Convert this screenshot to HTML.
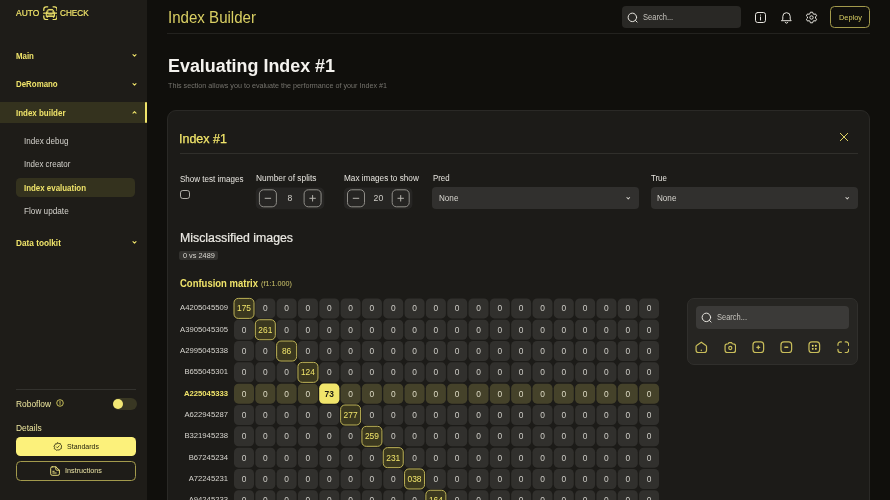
<!DOCTYPE html>
<html><head><meta charset="utf-8"><title>Index Builder</title>
<style>
*{box-sizing:border-box;margin:0;padding:0}
html,body{width:890px;height:500px;overflow:hidden;background:#100f0c;font-family:"Liberation Sans",sans-serif;color:#e8e6e0}
.sb *,.main *{position:absolute}
body>div{position:absolute;will-change:transform}
.t{white-space:nowrap;line-height:1;transform-origin:0 0}
.sb{left:0;top:0;width:147px;height:500px;background:#1e1c18}
.chev{left:131px;width:7px;height:7px}
.main{left:0;top:0;width:890px;height:500px}
.card{left:167px;top:110px;width:703px;height:420px;background:#1c1b18;border:1px solid #2a2926;border-radius:9px}
.step{height:22px;background:#262523;border-radius:5px}
.sbtn{width:18px;height:18px;border:1px solid #8f8d88;border-radius:4.500px;top:2px}
.sel{height:22px;background:#31302e;border-radius:4px}
.c{position:absolute;width:20px;height:20px;color:#cfcdc7;font-size:8.400px;line-height:20.200px;text-align:center}
.c.h{color:#dedbc6}
.c.d{color:#f0e46a}
.c.d.sl{color:#1a1912;font-weight:bold}
.rl{position:absolute;left:150px;width:78px;text-align:right;font-size:7.700px;color:#d6d4ce;line-height:20.600px;white-space:nowrap}
.rl.hl{color:#f0e46a;font-weight:bold}
.ti{width:12.600px;height:12.600px;top:340.600px;fill:none;stroke:#c9be5a;stroke-width:1.250;stroke-linecap:round;stroke-linejoin:round}
</style></head><body>
<div class="sb">
  <div class="t" style="left:16.30px;top:8.10px;font-size:9.8px;transform:scaleX(0.8618);color:#f0e46a;-webkit-text-stroke:.2px #f0e46a">AUTO</div>
  <svg style="left:42.500px;top:5.500px" width="14.800" height="14.300" viewBox="0 0 15 14.500" fill="none" stroke="#f0e46a" stroke-width="1.250" stroke-linecap="round" stroke-linejoin="round"><path d="M.8 4.500V3.200A2.400 2.400 0 0 1 3.200.8h1.600M10.200.8h1.600a2.400 2.400 0 0 1 2.400 2.400v1.300M14.200 10v1.300a2.400 2.400 0 0 1-2.400 2.400h-1.600M4.800 13.700H3.200A2.400 2.400 0 0 1 .8 11.300V10M.6 7.250h13.800"/><path d="M3.300 10.200V7.500L4.400 4.400Q4.700 3.500 5.700 3.500H9.300Q10.300 3.500 10.600 4.400L11.700 7.500V10.200Z" fill="#f0e46a" fill-opacity=".6" stroke-width="1"/><path d="M5.300 6.600L5.900 4.900H9.100L9.700 6.600Z" fill="#1e1c18" stroke="none"/><path d="M4.900 8.800h.01M10.100 8.800h.01" stroke="#1e1c18" stroke-width="1.200"/><path d="M4.300 10.600v.7M10.700 10.600v.7" stroke-width="1.300"/></svg>
  <div class="t" style="left:59.60px;top:8.10px;font-size:9.8px;transform:scaleX(0.8340);color:#f0e46a;-webkit-text-stroke:.2px #f0e46a">CHECK</div>

  <div class="t" style="left:16.30px;top:51.87px;font-size:8.3px;transform:scaleX(0.9471);font-weight:bold;color:#f0e46a">Main</div>
  <svg class="chev" style="top:52px" viewBox="0 0 7 7" fill="none" stroke="#f0e46a" stroke-width="1.100" stroke-linecap="round" stroke-linejoin="round"><path d="M2 2.700L3.500 4.200 5 2.700"/></svg>
  <div class="t" style="left:16.30px;top:80.27px;font-size:8.3px;transform:scaleX(0.9522);font-weight:bold;color:#f0e46a">DeRomano</div>
  <svg class="chev" style="top:80.500px" viewBox="0 0 7 7" fill="none" stroke="#f0e46a" stroke-width="1.100" stroke-linecap="round" stroke-linejoin="round"><path d="M2 2.700L3.500 4.200 5 2.700"/></svg>
  <div style="left:0;top:102px;width:147px;height:21px;background:#34321e"></div>
  <div style="left:144.800px;top:101.800px;width:2.500px;height:21.100px;background:#f0e46a;border-radius:1px"></div>
  <div class="t" style="left:16.20px;top:108.57px;font-size:8.3px;transform:scaleX(0.9587);font-weight:bold;color:#f0e46a">Index builder</div>
  <svg class="chev" style="top:109px" viewBox="0 0 7 7" fill="none" stroke="#f0e46a" stroke-width="1.100" stroke-linecap="round" stroke-linejoin="round"><path d="M2 4.200L3.500 2.700 5 4.200"/></svg>

  <div class="t" style="left:24.40px;top:137.07px;font-size:8.3px;transform:scaleX(0.9721);color:#d4d2cc">Index debug</div>
  <div class="t" style="left:24.40px;top:159.87px;font-size:8.3px;transform:scaleX(0.9561);color:#d4d2cc">Index creator</div>
  <div style="left:16px;top:177.500px;width:119px;height:19px;background:#34321e;border-radius:4.500px"></div>
  <div class="t" style="left:24.40px;top:183.87px;font-size:8.3px;transform:scaleX(0.9537);font-weight:bold;color:#f0e46a">Index evaluation</div>
  <div class="t" style="left:24.40px;top:207.07px;font-size:8.3px;transform:scaleX(0.9890);color:#d4d2cc">Flow update</div>
  <div class="t" style="left:16.30px;top:238.87px;font-size:8.3px;transform:scaleX(0.9939);font-weight:bold;color:#f0e46a">Data toolkit</div>
  <svg class="chev" style="top:239px" viewBox="0 0 7 7" fill="none" stroke="#f0e46a" stroke-width="1.100" stroke-linecap="round" stroke-linejoin="round"><path d="M2 2.700L3.500 4.200 5 2.700"/></svg>

  <div style="left:16px;top:388.500px;width:120px;height:1px;background:#33322e"></div>
  <div class="t" style="left:16.30px;top:399.52px;font-size:8.6px;transform:scaleX(0.9769);color:#ede69e">Roboflow</div>
  <svg style="left:56px;top:398.500px" width="8" height="8" viewBox="0 0 9 9" fill="none" stroke="#f0e46a" stroke-width=".9"><circle cx="4.500" cy="4.500" r="3.700"/><path d="M4.500 2.600v2.400M4.500 6.200v.2" stroke-linecap="round"/></svg>
  <div style="left:112.500px;top:397.500px;width:24px;height:12px;border-radius:6px;background:#393723"></div>
  <div style="left:113px;top:399.200px;width:9.600px;height:9.600px;border-radius:5px;background:#f3e874"></div>
  <div class="t" style="left:16.30px;top:423.52px;font-size:8.6px;transform:scaleX(0.9784);color:#ede69e">Details</div>
  <div style="left:16px;top:437px;width:120px;height:19px;border-radius:4.500px;background:#fcf17b"></div>
  <svg style="left:52.800px;top:441.800px" width="9.500" height="9.500" viewBox="0 0 10 10" fill="none" stroke="#3a3718" stroke-width=".9" stroke-linecap="round" stroke-linejoin="round"><path d="M5 .8l1.200.9 1.500-.1.400 1.400 1.200.9-.6 1.400.2 1.500-1.400.5-.8 1.200L5 8.300l-1.400.5-.9-1.200-1.400-.5.300-1.500L.9 4.200l1.200-.9.400-1.400 1.500.1z"/><path d="M3.600 5.100l1 1 1.900-2.100"/></svg>
  <div class="t" style="left:67.00px;top:442.50px;font-size:7.8px;transform:scaleX(0.9003);color:#25230f">Standards</div>
  <div style="left:16px;top:461px;width:120px;height:19.500px;border-radius:4.500px;border:1px solid #a39a4c"></div>
  <svg style="left:50px;top:466px" width="10.500" height="10" viewBox="0 0 10.500 10" fill="none" stroke="#e6dc7c" stroke-width="1" stroke-linecap="round" stroke-linejoin="round"><path d="M2.200.8h3.600l3.600 3.400v3.600a1.500 1.500 0 0 1-1.500 1.500H2.200A1.500 1.500 0 0 1 .7 7.800V2.300A1.500 1.500 0 0 1 2.200.8z"/><path d="M5.800.8v2.400a1 1 0 0 0 1 1h2.600M2.800 7h3.400M2.800 5.300h1.400"/></svg>
  <div class="t" style="left:64.70px;top:466.80px;font-size:7.8px;transform:scaleX(0.9256);color:#e9e2a4">Instructions</div>
</div>

<div class="main">
  <div class="t" style="left:168.00px;top:9.56px;font-size:16px;transform:scaleX(0.9423);color:#d9cf63">Index Builder</div>
  <div style="left:622px;top:6px;width:119px;height:22px;border-radius:4px;background:#292825"></div>
  <svg style="left:627.300px;top:11.600px" width="11.300" height="11.300" viewBox="0 0 12 12" fill="none" stroke="#e8e6e0" stroke-width="1.050" stroke-linecap="round"><circle cx="5.700" cy="5.700" r="4.500"/><path d="M9 9l1.700 1.700"/></svg>
  <div class="t" style="left:643.00px;top:13.86px;font-size:8.2px;transform:scaleX(0.9217);color:#c4c2bc">Search...</div>
  <svg style="left:754px;top:10.500px" width="13" height="13" viewBox="0 0 13 13" fill="none" stroke="#e8e6e0" stroke-width="1" stroke-linecap="round"><rect x="1.500" y="1.500" width="10" height="10" rx="2.200"/><path d="M6.500 6v3M6.500 4v.2"/></svg>
  <svg style="left:780px;top:10.500px" width="13" height="13" viewBox="0 0 13 13" fill="none" stroke="#e8e6e0" stroke-width="1" stroke-linecap="round" stroke-linejoin="round"><path d="M2.800 8.200V5.400a3.700 3.700 0 0 1 7.400 0v2.800l1 1.500H1.800zM5.200 11.300a1.400 1.400 0 0 0 2.600 0"/></svg>
  <svg style="left:805px;top:10.500px" width="13" height="13" viewBox="0 0 13 13" fill="none" stroke="#e8e6e0" stroke-width="1" stroke-linejoin="round"><circle cx="6.500" cy="6.500" r="1.700"/><path d="M5.400 1.200h2.200l.4 1.500 1 .6 1.500-.4 1.100 1.900-1.100 1.100v1.200l1.100 1.100-1.100 1.900-1.500-.4-1 .6-.4 1.500H5.400L5 10.300l-1-.6-1.500.4-1.100-1.900 1.100-1.100V5.900L1.400 4.800l1.100-1.900 1.500.4 1-.6z"/></svg>
  <div style="left:830.200px;top:5.800px;width:40px;height:22.700px;border-radius:4.500px;border:1px solid #a39a4c"></div>
  <div class="t" style="left:838.70px;top:13.97px;font-size:7.6px;transform:scaleX(0.9730);color:#d9cf63">Deploy</div>
  <div style="left:167px;top:32.500px;width:703px;height:1px;background:#23221f"></div>

  <div class="t" style="left:168.00px;top:57.16px;font-size:18px;transform:scaleX(0.9937);font-weight:bold;color:#f4f2ee">Evaluating Index #1</div>
  <div class="t" style="left:167.50px;top:81.92px;font-size:7.3px;transform:scaleX(0.9853);color:#75736d">This section allows you to evaluate the performance of your Index #1</div>

  <div class="card"></div>
  <div class="t" style="left:179.30px;top:133.14px;font-size:12.0px;transform:scaleX(1.0405);color:#f0e46a;-webkit-text-stroke:.25px #f0e46a">Index #1</div>
  <svg style="left:838.500px;top:132px" width="10" height="10" viewBox="0 0 10 10" stroke="#ddd264" stroke-width="1" stroke-linecap="round"><path d="M1.300 1.300l7.400 7.400M8.700 1.300L1.300 8.700"/></svg>
  <div style="left:180px;top:153px;width:678px;height:1px;background:#302f2b"></div>

  <div class="t" style="left:179.80px;top:175.30px;font-size:8.5px;transform:scaleX(0.9465);color:#e6e4de">Show test images</div>
  <div style="left:180px;top:189.500px;width:9.800px;height:9.500px;border:1.100px solid #b0aea8;border-radius:2.800px"></div>

  <div class="t" style="left:255.70px;top:174.30px;font-size:8.5px;transform:scaleX(0.9836);color:#e6e4de">Number of splits</div>
  <svg style="left:0;top:0" width="890" height="500" viewBox="0 0 890 500" fill="none"><rect x="255.7" y="187.500" width="68.600" height="21.800" rx="5" fill="#262523"/><rect x="259.40" y="189.800" width="17" height="17" rx="4.200" stroke="#8f8d88"/><rect x="304.10" y="189.800" width="17" height="17" rx="4.200" stroke="#8f8d88"/><path d="M265.10 198.300h5.600M309.80 198.300h5.600M312.60 195.500v5.600" stroke="#b4b2ac" stroke-width="1" stroke-linecap="round"/></svg><div class="t" style="left:279.90px;top:194.300px;width:20px;text-align:center;font-size:8.600px;color:#d0cec8">8</div>

  <div class="t" style="left:344.10px;top:174.30px;font-size:8.5px;transform:scaleX(0.9655);color:#e6e4de">Max images to show</div>
  <svg style="left:0;top:0" width="890" height="500" viewBox="0 0 890 500" fill="none"><rect x="343.8" y="187.500" width="68.600" height="21.800" rx="5" fill="#262523"/><rect x="347.50" y="189.800" width="17" height="17" rx="4.200" stroke="#8f8d88"/><rect x="392.20" y="189.800" width="17" height="17" rx="4.200" stroke="#8f8d88"/><path d="M353.20 198.300h5.600M397.90 198.300h5.600M400.70 195.500v5.600" stroke="#b4b2ac" stroke-width="1" stroke-linecap="round"/></svg><div class="t" style="left:368.40px;top:194.300px;width:20px;text-align:center;font-size:8.600px;color:#d0cec8">20</div>

  <div class="t" style="left:432.60px;top:174.40px;font-size:8.5px;transform:scaleX(0.9246);color:#e6e4de">Pred</div>
  <div class="sel" style="left:432px;top:187.300px;width:207px">
    <svg style="left:193px;top:7.300px" width="6.500" height="6.500" viewBox="0 0 7 7" fill="none" stroke="#d0cec8" stroke-width="1.100" stroke-linecap="round" stroke-linejoin="round"><path d="M2 2.700L3.500 4.200 5 2.700"/></svg></div>
  <div class="t" style="left:438.60px;top:194.37px;font-size:8.3px;transform:scaleX(0.9781);color:#d8d6d0">None</div>
  <div class="t" style="left:651.20px;top:174.40px;font-size:8.5px;transform:scaleX(0.9206);color:#e6e4de">True</div>
  <div class="sel" style="left:650.700px;top:187.300px;width:207px">
    <svg style="left:193px;top:7.300px" width="6.500" height="6.500" viewBox="0 0 7 7" fill="none" stroke="#d0cec8" stroke-width="1.100" stroke-linecap="round" stroke-linejoin="round"><path d="M2 2.700L3.500 4.200 5 2.700"/></svg></div>
  <div class="t" style="left:657.20px;top:194.37px;font-size:8.3px;transform:scaleX(0.9781);color:#d8d6d0">None</div>

  <div class="t" style="left:180.10px;top:231.94px;font-size:12px;transform:scaleX(1.0270);color:#eceae4;-webkit-text-stroke:.2px #eceae4">Misclassified images</div>
  <div style="left:179.300px;top:250.700px;width:38.600px;height:9px;border-radius:2px;background:#32312e"></div>
  <div class="t" style="left:182.70px;top:251.82px;font-size:7.3px;transform:scaleX(1.0050);color:#d8d6d0">0 vs 2489</div>

  <div class="t" style="left:180.10px;top:278.84px;font-size:10px;transform:scaleX(0.9486);font-weight:bold;color:#f0e46a">Confusion matrix</div>
  <div class="t" style="left:260.60px;top:280.11px;font-size:7.2px;transform:scaleX(1.0012);color:#cdc46a">(f1:1.000)</div>

<svg style="left:0;top:0" width="890" height="500" viewBox="0 0 890 500">
<rect x="234.00" y="298.40" width="20.00" height="20.00" rx="4.3" fill="#3b381f" stroke="#bdb256" stroke-width="1"/>
<rect x="255.32" y="298.40" width="20.00" height="20.00" rx="4.5" fill="#31302d"/>
<rect x="276.64" y="298.40" width="20.00" height="20.00" rx="4.5" fill="#31302d"/>
<rect x="297.96" y="298.40" width="20.00" height="20.00" rx="4.5" fill="#31302d"/>
<rect x="319.28" y="298.40" width="20.00" height="20.00" rx="4.5" fill="#31302d"/>
<rect x="340.60" y="298.40" width="20.00" height="20.00" rx="4.5" fill="#31302d"/>
<rect x="361.92" y="298.40" width="20.00" height="20.00" rx="4.5" fill="#31302d"/>
<rect x="383.24" y="298.40" width="20.00" height="20.00" rx="4.5" fill="#31302d"/>
<rect x="404.56" y="298.40" width="20.00" height="20.00" rx="4.5" fill="#31302d"/>
<rect x="425.88" y="298.40" width="20.00" height="20.00" rx="4.5" fill="#31302d"/>
<rect x="447.20" y="298.40" width="20.00" height="20.00" rx="4.5" fill="#31302d"/>
<rect x="468.52" y="298.40" width="20.00" height="20.00" rx="4.5" fill="#31302d"/>
<rect x="489.84" y="298.40" width="20.00" height="20.00" rx="4.5" fill="#31302d"/>
<rect x="511.16" y="298.40" width="20.00" height="20.00" rx="4.5" fill="#31302d"/>
<rect x="532.48" y="298.40" width="20.00" height="20.00" rx="4.5" fill="#31302d"/>
<rect x="553.80" y="298.40" width="20.00" height="20.00" rx="4.5" fill="#31302d"/>
<rect x="575.12" y="298.40" width="20.00" height="20.00" rx="4.5" fill="#31302d"/>
<rect x="596.44" y="298.40" width="20.00" height="20.00" rx="4.5" fill="#31302d"/>
<rect x="617.76" y="298.40" width="20.00" height="20.00" rx="4.5" fill="#31302d"/>
<rect x="639.08" y="298.40" width="20.00" height="20.00" rx="4.5" fill="#31302d"/>
<rect x="234.00" y="319.72" width="20.00" height="20.00" rx="4.5" fill="#31302d"/>
<rect x="255.32" y="319.72" width="20.00" height="20.00" rx="4.3" fill="#3b381f" stroke="#bdb256" stroke-width="1"/>
<rect x="276.64" y="319.72" width="20.00" height="20.00" rx="4.5" fill="#31302d"/>
<rect x="297.96" y="319.72" width="20.00" height="20.00" rx="4.5" fill="#31302d"/>
<rect x="319.28" y="319.72" width="20.00" height="20.00" rx="4.5" fill="#31302d"/>
<rect x="340.60" y="319.72" width="20.00" height="20.00" rx="4.5" fill="#31302d"/>
<rect x="361.92" y="319.72" width="20.00" height="20.00" rx="4.5" fill="#31302d"/>
<rect x="383.24" y="319.72" width="20.00" height="20.00" rx="4.5" fill="#31302d"/>
<rect x="404.56" y="319.72" width="20.00" height="20.00" rx="4.5" fill="#31302d"/>
<rect x="425.88" y="319.72" width="20.00" height="20.00" rx="4.5" fill="#31302d"/>
<rect x="447.20" y="319.72" width="20.00" height="20.00" rx="4.5" fill="#31302d"/>
<rect x="468.52" y="319.72" width="20.00" height="20.00" rx="4.5" fill="#31302d"/>
<rect x="489.84" y="319.72" width="20.00" height="20.00" rx="4.5" fill="#31302d"/>
<rect x="511.16" y="319.72" width="20.00" height="20.00" rx="4.5" fill="#31302d"/>
<rect x="532.48" y="319.72" width="20.00" height="20.00" rx="4.5" fill="#31302d"/>
<rect x="553.80" y="319.72" width="20.00" height="20.00" rx="4.5" fill="#31302d"/>
<rect x="575.12" y="319.72" width="20.00" height="20.00" rx="4.5" fill="#31302d"/>
<rect x="596.44" y="319.72" width="20.00" height="20.00" rx="4.5" fill="#31302d"/>
<rect x="617.76" y="319.72" width="20.00" height="20.00" rx="4.5" fill="#31302d"/>
<rect x="639.08" y="319.72" width="20.00" height="20.00" rx="4.5" fill="#31302d"/>
<rect x="234.00" y="341.04" width="20.00" height="20.00" rx="4.5" fill="#31302d"/>
<rect x="255.32" y="341.04" width="20.00" height="20.00" rx="4.5" fill="#31302d"/>
<rect x="276.64" y="341.04" width="20.00" height="20.00" rx="4.3" fill="#3b381f" stroke="#bdb256" stroke-width="1"/>
<rect x="297.96" y="341.04" width="20.00" height="20.00" rx="4.5" fill="#31302d"/>
<rect x="319.28" y="341.04" width="20.00" height="20.00" rx="4.5" fill="#31302d"/>
<rect x="340.60" y="341.04" width="20.00" height="20.00" rx="4.5" fill="#31302d"/>
<rect x="361.92" y="341.04" width="20.00" height="20.00" rx="4.5" fill="#31302d"/>
<rect x="383.24" y="341.04" width="20.00" height="20.00" rx="4.5" fill="#31302d"/>
<rect x="404.56" y="341.04" width="20.00" height="20.00" rx="4.5" fill="#31302d"/>
<rect x="425.88" y="341.04" width="20.00" height="20.00" rx="4.5" fill="#31302d"/>
<rect x="447.20" y="341.04" width="20.00" height="20.00" rx="4.5" fill="#31302d"/>
<rect x="468.52" y="341.04" width="20.00" height="20.00" rx="4.5" fill="#31302d"/>
<rect x="489.84" y="341.04" width="20.00" height="20.00" rx="4.5" fill="#31302d"/>
<rect x="511.16" y="341.04" width="20.00" height="20.00" rx="4.5" fill="#31302d"/>
<rect x="532.48" y="341.04" width="20.00" height="20.00" rx="4.5" fill="#31302d"/>
<rect x="553.80" y="341.04" width="20.00" height="20.00" rx="4.5" fill="#31302d"/>
<rect x="575.12" y="341.04" width="20.00" height="20.00" rx="4.5" fill="#31302d"/>
<rect x="596.44" y="341.04" width="20.00" height="20.00" rx="4.5" fill="#31302d"/>
<rect x="617.76" y="341.04" width="20.00" height="20.00" rx="4.5" fill="#31302d"/>
<rect x="639.08" y="341.04" width="20.00" height="20.00" rx="4.5" fill="#31302d"/>
<rect x="234.00" y="362.36" width="20.00" height="20.00" rx="4.5" fill="#31302d"/>
<rect x="255.32" y="362.36" width="20.00" height="20.00" rx="4.5" fill="#31302d"/>
<rect x="276.64" y="362.36" width="20.00" height="20.00" rx="4.5" fill="#31302d"/>
<rect x="297.96" y="362.36" width="20.00" height="20.00" rx="4.3" fill="#3b381f" stroke="#bdb256" stroke-width="1"/>
<rect x="319.28" y="362.36" width="20.00" height="20.00" rx="4.5" fill="#31302d"/>
<rect x="340.60" y="362.36" width="20.00" height="20.00" rx="4.5" fill="#31302d"/>
<rect x="361.92" y="362.36" width="20.00" height="20.00" rx="4.5" fill="#31302d"/>
<rect x="383.24" y="362.36" width="20.00" height="20.00" rx="4.5" fill="#31302d"/>
<rect x="404.56" y="362.36" width="20.00" height="20.00" rx="4.5" fill="#31302d"/>
<rect x="425.88" y="362.36" width="20.00" height="20.00" rx="4.5" fill="#31302d"/>
<rect x="447.20" y="362.36" width="20.00" height="20.00" rx="4.5" fill="#31302d"/>
<rect x="468.52" y="362.36" width="20.00" height="20.00" rx="4.5" fill="#31302d"/>
<rect x="489.84" y="362.36" width="20.00" height="20.00" rx="4.5" fill="#31302d"/>
<rect x="511.16" y="362.36" width="20.00" height="20.00" rx="4.5" fill="#31302d"/>
<rect x="532.48" y="362.36" width="20.00" height="20.00" rx="4.5" fill="#31302d"/>
<rect x="553.80" y="362.36" width="20.00" height="20.00" rx="4.5" fill="#31302d"/>
<rect x="575.12" y="362.36" width="20.00" height="20.00" rx="4.5" fill="#31302d"/>
<rect x="596.44" y="362.36" width="20.00" height="20.00" rx="4.5" fill="#31302d"/>
<rect x="617.76" y="362.36" width="20.00" height="20.00" rx="4.5" fill="#31302d"/>
<rect x="639.08" y="362.36" width="20.00" height="20.00" rx="4.5" fill="#31302d"/>
<rect x="234.00" y="383.68" width="20.00" height="20.00" rx="4.5" fill="#45422a"/>
<rect x="255.32" y="383.68" width="20.00" height="20.00" rx="4.5" fill="#45422a"/>
<rect x="276.64" y="383.68" width="20.00" height="20.00" rx="4.5" fill="#45422a"/>
<rect x="297.96" y="383.68" width="20.00" height="20.00" rx="4.5" fill="#45422a"/>
<rect x="319.18" y="383.58" width="20.20" height="20.20" rx="4.6" fill="#f1e56b"/>
<rect x="340.60" y="383.68" width="20.00" height="20.00" rx="4.5" fill="#45422a"/>
<rect x="361.92" y="383.68" width="20.00" height="20.00" rx="4.5" fill="#45422a"/>
<rect x="383.24" y="383.68" width="20.00" height="20.00" rx="4.5" fill="#45422a"/>
<rect x="404.56" y="383.68" width="20.00" height="20.00" rx="4.5" fill="#45422a"/>
<rect x="425.88" y="383.68" width="20.00" height="20.00" rx="4.5" fill="#45422a"/>
<rect x="447.20" y="383.68" width="20.00" height="20.00" rx="4.5" fill="#45422a"/>
<rect x="468.52" y="383.68" width="20.00" height="20.00" rx="4.5" fill="#45422a"/>
<rect x="489.84" y="383.68" width="20.00" height="20.00" rx="4.5" fill="#45422a"/>
<rect x="511.16" y="383.68" width="20.00" height="20.00" rx="4.5" fill="#45422a"/>
<rect x="532.48" y="383.68" width="20.00" height="20.00" rx="4.5" fill="#45422a"/>
<rect x="553.80" y="383.68" width="20.00" height="20.00" rx="4.5" fill="#45422a"/>
<rect x="575.12" y="383.68" width="20.00" height="20.00" rx="4.5" fill="#45422a"/>
<rect x="596.44" y="383.68" width="20.00" height="20.00" rx="4.5" fill="#45422a"/>
<rect x="617.76" y="383.68" width="20.00" height="20.00" rx="4.5" fill="#45422a"/>
<rect x="639.08" y="383.68" width="20.00" height="20.00" rx="4.5" fill="#45422a"/>
<rect x="234.00" y="405.00" width="20.00" height="20.00" rx="4.5" fill="#31302d"/>
<rect x="255.32" y="405.00" width="20.00" height="20.00" rx="4.5" fill="#31302d"/>
<rect x="276.64" y="405.00" width="20.00" height="20.00" rx="4.5" fill="#31302d"/>
<rect x="297.96" y="405.00" width="20.00" height="20.00" rx="4.5" fill="#31302d"/>
<rect x="319.28" y="405.00" width="20.00" height="20.00" rx="4.5" fill="#31302d"/>
<rect x="340.60" y="405.00" width="20.00" height="20.00" rx="4.3" fill="#3b381f" stroke="#bdb256" stroke-width="1"/>
<rect x="361.92" y="405.00" width="20.00" height="20.00" rx="4.5" fill="#31302d"/>
<rect x="383.24" y="405.00" width="20.00" height="20.00" rx="4.5" fill="#31302d"/>
<rect x="404.56" y="405.00" width="20.00" height="20.00" rx="4.5" fill="#31302d"/>
<rect x="425.88" y="405.00" width="20.00" height="20.00" rx="4.5" fill="#31302d"/>
<rect x="447.20" y="405.00" width="20.00" height="20.00" rx="4.5" fill="#31302d"/>
<rect x="468.52" y="405.00" width="20.00" height="20.00" rx="4.5" fill="#31302d"/>
<rect x="489.84" y="405.00" width="20.00" height="20.00" rx="4.5" fill="#31302d"/>
<rect x="511.16" y="405.00" width="20.00" height="20.00" rx="4.5" fill="#31302d"/>
<rect x="532.48" y="405.00" width="20.00" height="20.00" rx="4.5" fill="#31302d"/>
<rect x="553.80" y="405.00" width="20.00" height="20.00" rx="4.5" fill="#31302d"/>
<rect x="575.12" y="405.00" width="20.00" height="20.00" rx="4.5" fill="#31302d"/>
<rect x="596.44" y="405.00" width="20.00" height="20.00" rx="4.5" fill="#31302d"/>
<rect x="617.76" y="405.00" width="20.00" height="20.00" rx="4.5" fill="#31302d"/>
<rect x="639.08" y="405.00" width="20.00" height="20.00" rx="4.5" fill="#31302d"/>
<rect x="234.00" y="426.32" width="20.00" height="20.00" rx="4.5" fill="#31302d"/>
<rect x="255.32" y="426.32" width="20.00" height="20.00" rx="4.5" fill="#31302d"/>
<rect x="276.64" y="426.32" width="20.00" height="20.00" rx="4.5" fill="#31302d"/>
<rect x="297.96" y="426.32" width="20.00" height="20.00" rx="4.5" fill="#31302d"/>
<rect x="319.28" y="426.32" width="20.00" height="20.00" rx="4.5" fill="#31302d"/>
<rect x="340.60" y="426.32" width="20.00" height="20.00" rx="4.5" fill="#31302d"/>
<rect x="361.92" y="426.32" width="20.00" height="20.00" rx="4.3" fill="#3b381f" stroke="#bdb256" stroke-width="1"/>
<rect x="383.24" y="426.32" width="20.00" height="20.00" rx="4.5" fill="#31302d"/>
<rect x="404.56" y="426.32" width="20.00" height="20.00" rx="4.5" fill="#31302d"/>
<rect x="425.88" y="426.32" width="20.00" height="20.00" rx="4.5" fill="#31302d"/>
<rect x="447.20" y="426.32" width="20.00" height="20.00" rx="4.5" fill="#31302d"/>
<rect x="468.52" y="426.32" width="20.00" height="20.00" rx="4.5" fill="#31302d"/>
<rect x="489.84" y="426.32" width="20.00" height="20.00" rx="4.5" fill="#31302d"/>
<rect x="511.16" y="426.32" width="20.00" height="20.00" rx="4.5" fill="#31302d"/>
<rect x="532.48" y="426.32" width="20.00" height="20.00" rx="4.5" fill="#31302d"/>
<rect x="553.80" y="426.32" width="20.00" height="20.00" rx="4.5" fill="#31302d"/>
<rect x="575.12" y="426.32" width="20.00" height="20.00" rx="4.5" fill="#31302d"/>
<rect x="596.44" y="426.32" width="20.00" height="20.00" rx="4.5" fill="#31302d"/>
<rect x="617.76" y="426.32" width="20.00" height="20.00" rx="4.5" fill="#31302d"/>
<rect x="639.08" y="426.32" width="20.00" height="20.00" rx="4.5" fill="#31302d"/>
<rect x="234.00" y="447.64" width="20.00" height="20.00" rx="4.5" fill="#31302d"/>
<rect x="255.32" y="447.64" width="20.00" height="20.00" rx="4.5" fill="#31302d"/>
<rect x="276.64" y="447.64" width="20.00" height="20.00" rx="4.5" fill="#31302d"/>
<rect x="297.96" y="447.64" width="20.00" height="20.00" rx="4.5" fill="#31302d"/>
<rect x="319.28" y="447.64" width="20.00" height="20.00" rx="4.5" fill="#31302d"/>
<rect x="340.60" y="447.64" width="20.00" height="20.00" rx="4.5" fill="#31302d"/>
<rect x="361.92" y="447.64" width="20.00" height="20.00" rx="4.5" fill="#31302d"/>
<rect x="383.24" y="447.64" width="20.00" height="20.00" rx="4.3" fill="#3b381f" stroke="#bdb256" stroke-width="1"/>
<rect x="404.56" y="447.64" width="20.00" height="20.00" rx="4.5" fill="#31302d"/>
<rect x="425.88" y="447.64" width="20.00" height="20.00" rx="4.5" fill="#31302d"/>
<rect x="447.20" y="447.64" width="20.00" height="20.00" rx="4.5" fill="#31302d"/>
<rect x="468.52" y="447.64" width="20.00" height="20.00" rx="4.5" fill="#31302d"/>
<rect x="489.84" y="447.64" width="20.00" height="20.00" rx="4.5" fill="#31302d"/>
<rect x="511.16" y="447.64" width="20.00" height="20.00" rx="4.5" fill="#31302d"/>
<rect x="532.48" y="447.64" width="20.00" height="20.00" rx="4.5" fill="#31302d"/>
<rect x="553.80" y="447.64" width="20.00" height="20.00" rx="4.5" fill="#31302d"/>
<rect x="575.12" y="447.64" width="20.00" height="20.00" rx="4.5" fill="#31302d"/>
<rect x="596.44" y="447.64" width="20.00" height="20.00" rx="4.5" fill="#31302d"/>
<rect x="617.76" y="447.64" width="20.00" height="20.00" rx="4.5" fill="#31302d"/>
<rect x="639.08" y="447.64" width="20.00" height="20.00" rx="4.5" fill="#31302d"/>
<rect x="234.00" y="468.96" width="20.00" height="20.00" rx="4.5" fill="#31302d"/>
<rect x="255.32" y="468.96" width="20.00" height="20.00" rx="4.5" fill="#31302d"/>
<rect x="276.64" y="468.96" width="20.00" height="20.00" rx="4.5" fill="#31302d"/>
<rect x="297.96" y="468.96" width="20.00" height="20.00" rx="4.5" fill="#31302d"/>
<rect x="319.28" y="468.96" width="20.00" height="20.00" rx="4.5" fill="#31302d"/>
<rect x="340.60" y="468.96" width="20.00" height="20.00" rx="4.5" fill="#31302d"/>
<rect x="361.92" y="468.96" width="20.00" height="20.00" rx="4.5" fill="#31302d"/>
<rect x="383.24" y="468.96" width="20.00" height="20.00" rx="4.5" fill="#31302d"/>
<rect x="404.56" y="468.96" width="20.00" height="20.00" rx="4.3" fill="#3b381f" stroke="#bdb256" stroke-width="1"/>
<rect x="425.88" y="468.96" width="20.00" height="20.00" rx="4.5" fill="#31302d"/>
<rect x="447.20" y="468.96" width="20.00" height="20.00" rx="4.5" fill="#31302d"/>
<rect x="468.52" y="468.96" width="20.00" height="20.00" rx="4.5" fill="#31302d"/>
<rect x="489.84" y="468.96" width="20.00" height="20.00" rx="4.5" fill="#31302d"/>
<rect x="511.16" y="468.96" width="20.00" height="20.00" rx="4.5" fill="#31302d"/>
<rect x="532.48" y="468.96" width="20.00" height="20.00" rx="4.5" fill="#31302d"/>
<rect x="553.80" y="468.96" width="20.00" height="20.00" rx="4.5" fill="#31302d"/>
<rect x="575.12" y="468.96" width="20.00" height="20.00" rx="4.5" fill="#31302d"/>
<rect x="596.44" y="468.96" width="20.00" height="20.00" rx="4.5" fill="#31302d"/>
<rect x="617.76" y="468.96" width="20.00" height="20.00" rx="4.5" fill="#31302d"/>
<rect x="639.08" y="468.96" width="20.00" height="20.00" rx="4.5" fill="#31302d"/>
<rect x="234.00" y="490.28" width="20.00" height="20.00" rx="4.5" fill="#31302d"/>
<rect x="255.32" y="490.28" width="20.00" height="20.00" rx="4.5" fill="#31302d"/>
<rect x="276.64" y="490.28" width="20.00" height="20.00" rx="4.5" fill="#31302d"/>
<rect x="297.96" y="490.28" width="20.00" height="20.00" rx="4.5" fill="#31302d"/>
<rect x="319.28" y="490.28" width="20.00" height="20.00" rx="4.5" fill="#31302d"/>
<rect x="340.60" y="490.28" width="20.00" height="20.00" rx="4.5" fill="#31302d"/>
<rect x="361.92" y="490.28" width="20.00" height="20.00" rx="4.5" fill="#31302d"/>
<rect x="383.24" y="490.28" width="20.00" height="20.00" rx="4.5" fill="#31302d"/>
<rect x="404.56" y="490.28" width="20.00" height="20.00" rx="4.5" fill="#31302d"/>
<rect x="425.88" y="490.28" width="20.00" height="20.00" rx="4.3" fill="#3b381f" stroke="#bdb256" stroke-width="1"/>
<rect x="447.20" y="490.28" width="20.00" height="20.00" rx="4.5" fill="#31302d"/>
<rect x="468.52" y="490.28" width="20.00" height="20.00" rx="4.5" fill="#31302d"/>
<rect x="489.84" y="490.28" width="20.00" height="20.00" rx="4.5" fill="#31302d"/>
<rect x="511.16" y="490.28" width="20.00" height="20.00" rx="4.5" fill="#31302d"/>
<rect x="532.48" y="490.28" width="20.00" height="20.00" rx="4.5" fill="#31302d"/>
<rect x="553.80" y="490.28" width="20.00" height="20.00" rx="4.5" fill="#31302d"/>
<rect x="575.12" y="490.28" width="20.00" height="20.00" rx="4.5" fill="#31302d"/>
<rect x="596.44" y="490.28" width="20.00" height="20.00" rx="4.5" fill="#31302d"/>
<rect x="617.76" y="490.28" width="20.00" height="20.00" rx="4.5" fill="#31302d"/>
<rect x="639.08" y="490.28" width="20.00" height="20.00" rx="4.5" fill="#31302d"/>
</svg>
<div class="rl" style="top:298.40px">A4205045509</div>
<div class="c d" style="left:234.00px;top:298.40px">175</div>
<div class="c" style="left:255.32px;top:298.40px">0</div>
<div class="c" style="left:276.64px;top:298.40px">0</div>
<div class="c" style="left:297.96px;top:298.40px">0</div>
<div class="c" style="left:319.28px;top:298.40px">0</div>
<div class="c" style="left:340.60px;top:298.40px">0</div>
<div class="c" style="left:361.92px;top:298.40px">0</div>
<div class="c" style="left:383.24px;top:298.40px">0</div>
<div class="c" style="left:404.56px;top:298.40px">0</div>
<div class="c" style="left:425.88px;top:298.40px">0</div>
<div class="c" style="left:447.20px;top:298.40px">0</div>
<div class="c" style="left:468.52px;top:298.40px">0</div>
<div class="c" style="left:489.84px;top:298.40px">0</div>
<div class="c" style="left:511.16px;top:298.40px">0</div>
<div class="c" style="left:532.48px;top:298.40px">0</div>
<div class="c" style="left:553.80px;top:298.40px">0</div>
<div class="c" style="left:575.12px;top:298.40px">0</div>
<div class="c" style="left:596.44px;top:298.40px">0</div>
<div class="c" style="left:617.76px;top:298.40px">0</div>
<div class="c" style="left:639.08px;top:298.40px">0</div>
<div class="rl" style="top:319.72px">A3905045305</div>
<div class="c" style="left:234.00px;top:319.72px">0</div>
<div class="c d" style="left:255.32px;top:319.72px">261</div>
<div class="c" style="left:276.64px;top:319.72px">0</div>
<div class="c" style="left:297.96px;top:319.72px">0</div>
<div class="c" style="left:319.28px;top:319.72px">0</div>
<div class="c" style="left:340.60px;top:319.72px">0</div>
<div class="c" style="left:361.92px;top:319.72px">0</div>
<div class="c" style="left:383.24px;top:319.72px">0</div>
<div class="c" style="left:404.56px;top:319.72px">0</div>
<div class="c" style="left:425.88px;top:319.72px">0</div>
<div class="c" style="left:447.20px;top:319.72px">0</div>
<div class="c" style="left:468.52px;top:319.72px">0</div>
<div class="c" style="left:489.84px;top:319.72px">0</div>
<div class="c" style="left:511.16px;top:319.72px">0</div>
<div class="c" style="left:532.48px;top:319.72px">0</div>
<div class="c" style="left:553.80px;top:319.72px">0</div>
<div class="c" style="left:575.12px;top:319.72px">0</div>
<div class="c" style="left:596.44px;top:319.72px">0</div>
<div class="c" style="left:617.76px;top:319.72px">0</div>
<div class="c" style="left:639.08px;top:319.72px">0</div>
<div class="rl" style="top:341.04px">A2995045338</div>
<div class="c" style="left:234.00px;top:341.04px">0</div>
<div class="c" style="left:255.32px;top:341.04px">0</div>
<div class="c d" style="left:276.64px;top:341.04px">86</div>
<div class="c" style="left:297.96px;top:341.04px">0</div>
<div class="c" style="left:319.28px;top:341.04px">0</div>
<div class="c" style="left:340.60px;top:341.04px">0</div>
<div class="c" style="left:361.92px;top:341.04px">0</div>
<div class="c" style="left:383.24px;top:341.04px">0</div>
<div class="c" style="left:404.56px;top:341.04px">0</div>
<div class="c" style="left:425.88px;top:341.04px">0</div>
<div class="c" style="left:447.20px;top:341.04px">0</div>
<div class="c" style="left:468.52px;top:341.04px">0</div>
<div class="c" style="left:489.84px;top:341.04px">0</div>
<div class="c" style="left:511.16px;top:341.04px">0</div>
<div class="c" style="left:532.48px;top:341.04px">0</div>
<div class="c" style="left:553.80px;top:341.04px">0</div>
<div class="c" style="left:575.12px;top:341.04px">0</div>
<div class="c" style="left:596.44px;top:341.04px">0</div>
<div class="c" style="left:617.76px;top:341.04px">0</div>
<div class="c" style="left:639.08px;top:341.04px">0</div>
<div class="rl" style="top:362.36px">B655045301</div>
<div class="c" style="left:234.00px;top:362.36px">0</div>
<div class="c" style="left:255.32px;top:362.36px">0</div>
<div class="c" style="left:276.64px;top:362.36px">0</div>
<div class="c d" style="left:297.96px;top:362.36px">124</div>
<div class="c" style="left:319.28px;top:362.36px">0</div>
<div class="c" style="left:340.60px;top:362.36px">0</div>
<div class="c" style="left:361.92px;top:362.36px">0</div>
<div class="c" style="left:383.24px;top:362.36px">0</div>
<div class="c" style="left:404.56px;top:362.36px">0</div>
<div class="c" style="left:425.88px;top:362.36px">0</div>
<div class="c" style="left:447.20px;top:362.36px">0</div>
<div class="c" style="left:468.52px;top:362.36px">0</div>
<div class="c" style="left:489.84px;top:362.36px">0</div>
<div class="c" style="left:511.16px;top:362.36px">0</div>
<div class="c" style="left:532.48px;top:362.36px">0</div>
<div class="c" style="left:553.80px;top:362.36px">0</div>
<div class="c" style="left:575.12px;top:362.36px">0</div>
<div class="c" style="left:596.44px;top:362.36px">0</div>
<div class="c" style="left:617.76px;top:362.36px">0</div>
<div class="c" style="left:639.08px;top:362.36px">0</div>
<div class="rl hl" style="top:383.68px">A225045333</div>
<div class="c h" style="left:234.00px;top:383.68px">0</div>
<div class="c h" style="left:255.32px;top:383.68px">0</div>
<div class="c h" style="left:276.64px;top:383.68px">0</div>
<div class="c h" style="left:297.96px;top:383.68px">0</div>
<div class="c d sl" style="left:319.28px;top:383.68px">73</div>
<div class="c h" style="left:340.60px;top:383.68px">0</div>
<div class="c h" style="left:361.92px;top:383.68px">0</div>
<div class="c h" style="left:383.24px;top:383.68px">0</div>
<div class="c h" style="left:404.56px;top:383.68px">0</div>
<div class="c h" style="left:425.88px;top:383.68px">0</div>
<div class="c h" style="left:447.20px;top:383.68px">0</div>
<div class="c h" style="left:468.52px;top:383.68px">0</div>
<div class="c h" style="left:489.84px;top:383.68px">0</div>
<div class="c h" style="left:511.16px;top:383.68px">0</div>
<div class="c h" style="left:532.48px;top:383.68px">0</div>
<div class="c h" style="left:553.80px;top:383.68px">0</div>
<div class="c h" style="left:575.12px;top:383.68px">0</div>
<div class="c h" style="left:596.44px;top:383.68px">0</div>
<div class="c h" style="left:617.76px;top:383.68px">0</div>
<div class="c h" style="left:639.08px;top:383.68px">0</div>
<div class="rl" style="top:405.00px">A622945287</div>
<div class="c" style="left:234.00px;top:405.00px">0</div>
<div class="c" style="left:255.32px;top:405.00px">0</div>
<div class="c" style="left:276.64px;top:405.00px">0</div>
<div class="c" style="left:297.96px;top:405.00px">0</div>
<div class="c" style="left:319.28px;top:405.00px">0</div>
<div class="c d" style="left:340.60px;top:405.00px">277</div>
<div class="c" style="left:361.92px;top:405.00px">0</div>
<div class="c" style="left:383.24px;top:405.00px">0</div>
<div class="c" style="left:404.56px;top:405.00px">0</div>
<div class="c" style="left:425.88px;top:405.00px">0</div>
<div class="c" style="left:447.20px;top:405.00px">0</div>
<div class="c" style="left:468.52px;top:405.00px">0</div>
<div class="c" style="left:489.84px;top:405.00px">0</div>
<div class="c" style="left:511.16px;top:405.00px">0</div>
<div class="c" style="left:532.48px;top:405.00px">0</div>
<div class="c" style="left:553.80px;top:405.00px">0</div>
<div class="c" style="left:575.12px;top:405.00px">0</div>
<div class="c" style="left:596.44px;top:405.00px">0</div>
<div class="c" style="left:617.76px;top:405.00px">0</div>
<div class="c" style="left:639.08px;top:405.00px">0</div>
<div class="rl" style="top:426.32px">B321945238</div>
<div class="c" style="left:234.00px;top:426.32px">0</div>
<div class="c" style="left:255.32px;top:426.32px">0</div>
<div class="c" style="left:276.64px;top:426.32px">0</div>
<div class="c" style="left:297.96px;top:426.32px">0</div>
<div class="c" style="left:319.28px;top:426.32px">0</div>
<div class="c" style="left:340.60px;top:426.32px">0</div>
<div class="c d" style="left:361.92px;top:426.32px">259</div>
<div class="c" style="left:383.24px;top:426.32px">0</div>
<div class="c" style="left:404.56px;top:426.32px">0</div>
<div class="c" style="left:425.88px;top:426.32px">0</div>
<div class="c" style="left:447.20px;top:426.32px">0</div>
<div class="c" style="left:468.52px;top:426.32px">0</div>
<div class="c" style="left:489.84px;top:426.32px">0</div>
<div class="c" style="left:511.16px;top:426.32px">0</div>
<div class="c" style="left:532.48px;top:426.32px">0</div>
<div class="c" style="left:553.80px;top:426.32px">0</div>
<div class="c" style="left:575.12px;top:426.32px">0</div>
<div class="c" style="left:596.44px;top:426.32px">0</div>
<div class="c" style="left:617.76px;top:426.32px">0</div>
<div class="c" style="left:639.08px;top:426.32px">0</div>
<div class="rl" style="top:447.64px">B67245234</div>
<div class="c" style="left:234.00px;top:447.64px">0</div>
<div class="c" style="left:255.32px;top:447.64px">0</div>
<div class="c" style="left:276.64px;top:447.64px">0</div>
<div class="c" style="left:297.96px;top:447.64px">0</div>
<div class="c" style="left:319.28px;top:447.64px">0</div>
<div class="c" style="left:340.60px;top:447.64px">0</div>
<div class="c" style="left:361.92px;top:447.64px">0</div>
<div class="c d" style="left:383.24px;top:447.64px">231</div>
<div class="c" style="left:404.56px;top:447.64px">0</div>
<div class="c" style="left:425.88px;top:447.64px">0</div>
<div class="c" style="left:447.20px;top:447.64px">0</div>
<div class="c" style="left:468.52px;top:447.64px">0</div>
<div class="c" style="left:489.84px;top:447.64px">0</div>
<div class="c" style="left:511.16px;top:447.64px">0</div>
<div class="c" style="left:532.48px;top:447.64px">0</div>
<div class="c" style="left:553.80px;top:447.64px">0</div>
<div class="c" style="left:575.12px;top:447.64px">0</div>
<div class="c" style="left:596.44px;top:447.64px">0</div>
<div class="c" style="left:617.76px;top:447.64px">0</div>
<div class="c" style="left:639.08px;top:447.64px">0</div>
<div class="rl" style="top:468.96px">A72245231</div>
<div class="c" style="left:234.00px;top:468.96px">0</div>
<div class="c" style="left:255.32px;top:468.96px">0</div>
<div class="c" style="left:276.64px;top:468.96px">0</div>
<div class="c" style="left:297.96px;top:468.96px">0</div>
<div class="c" style="left:319.28px;top:468.96px">0</div>
<div class="c" style="left:340.60px;top:468.96px">0</div>
<div class="c" style="left:361.92px;top:468.96px">0</div>
<div class="c" style="left:383.24px;top:468.96px">0</div>
<div class="c d" style="left:404.56px;top:468.96px">038</div>
<div class="c" style="left:425.88px;top:468.96px">0</div>
<div class="c" style="left:447.20px;top:468.96px">0</div>
<div class="c" style="left:468.52px;top:468.96px">0</div>
<div class="c" style="left:489.84px;top:468.96px">0</div>
<div class="c" style="left:511.16px;top:468.96px">0</div>
<div class="c" style="left:532.48px;top:468.96px">0</div>
<div class="c" style="left:553.80px;top:468.96px">0</div>
<div class="c" style="left:575.12px;top:468.96px">0</div>
<div class="c" style="left:596.44px;top:468.96px">0</div>
<div class="c" style="left:617.76px;top:468.96px">0</div>
<div class="c" style="left:639.08px;top:468.96px">0</div>
<div class="rl" style="top:490.28px">A94245233</div>
<div class="c" style="left:234.00px;top:490.28px">0</div>
<div class="c" style="left:255.32px;top:490.28px">0</div>
<div class="c" style="left:276.64px;top:490.28px">0</div>
<div class="c" style="left:297.96px;top:490.28px">0</div>
<div class="c" style="left:319.28px;top:490.28px">0</div>
<div class="c" style="left:340.60px;top:490.28px">0</div>
<div class="c" style="left:361.92px;top:490.28px">0</div>
<div class="c" style="left:383.24px;top:490.28px">0</div>
<div class="c" style="left:404.56px;top:490.28px">0</div>
<div class="c d" style="left:425.88px;top:490.28px">164</div>
<div class="c" style="left:447.20px;top:490.28px">0</div>
<div class="c" style="left:468.52px;top:490.28px">0</div>
<div class="c" style="left:489.84px;top:490.28px">0</div>
<div class="c" style="left:511.16px;top:490.28px">0</div>
<div class="c" style="left:532.48px;top:490.28px">0</div>
<div class="c" style="left:553.80px;top:490.28px">0</div>
<div class="c" style="left:575.12px;top:490.28px">0</div>
<div class="c" style="left:596.44px;top:490.28px">0</div>
<div class="c" style="left:617.76px;top:490.28px">0</div>
<div class="c" style="left:639.08px;top:490.28px">0</div>

  <div style="left:687.200px;top:298.300px;width:170.700px;height:66.600px;border-radius:7px;background:#262522;border:1px solid #302f2c"></div>
  <div style="left:695.700px;top:306.200px;width:153.800px;height:22.400px;border-radius:4px;background:#3b3a38"></div>
  <svg style="left:701.300px;top:312.200px" width="11.300" height="11.300" viewBox="0 0 12 12" fill="none" stroke="#e8e6e0" stroke-width="1.050" stroke-linecap="round"><circle cx="5.700" cy="5.700" r="4.500"/><path d="M9 9l1.700 1.700"/></svg>
  <div class="t" style="left:717.10px;top:314.46px;font-size:8.2px;transform:scaleX(0.9156);color:#c4c2bc">Search...</div>

  <svg class="ti" style="left:695.200px" viewBox="0 0 13 13"><path d="M6.500 1.200L11.300 4.600Q11.900 5 11.900 5.800V9.600A2.400 2.400 0 0 1 9.500 12H3.500A2.400 2.400 0 0 1 1.100 9.600V5.800Q1.100 5 1.700 4.600Z"/><path d="M6.500 9.400v.5"/></svg>
  <svg class="ti" style="left:723.500px" viewBox="0 0 13 13"><path d="M4.400 2.800L5.200 1.600H7.800L8.600 2.800L10.600 3.300Q11.900 3.700 11.900 5V9.600A2.400 2.400 0 0 1 9.500 12H3.500A2.400 2.400 0 0 1 1.100 9.600V5Q1.100 3.700 2.400 3.300Z"/><circle cx="6.500" cy="7.200" r="1.600"/></svg>
  <svg class="ti" style="left:752px" viewBox="0 0 13 13"><rect x="1" y="1" width="11" height="11" rx="3"/><path d="M6.500 5v3M5 6.500h3" stroke-width="1.300"/></svg>
  <svg class="ti" style="left:780.300px" viewBox="0 0 13 13"><rect x="1" y="1" width="11" height="11" rx="3"/><path d="M5 6.500h3" stroke-width="1.400"/></svg>
  <svg class="ti" style="left:808.400px" viewBox="0 0 13 13"><rect x="1" y="1" width="11" height="11" rx="3"/><path d="M4.900 4.900h.01M8.100 4.900h.01M4.900 8.100h.01M8.100 8.100h.01" stroke="#efe36a" stroke-width="2"/></svg>
  <svg class="ti" style="left:836.800px" viewBox="0 0 13 13"><path d="M1 4.500V3.500A2.500 2.500 0 0 1 3.500 1h1M8.500 1h1A2.500 2.500 0 0 1 12 3.500v1M12 8.500v1a2.500 2.500 0 0 1-2.500 2.500h-1M4.500 12h-1A2.500 2.500 0 0 1 1 9.500v-1"/></svg>
</div>
</body></html>
